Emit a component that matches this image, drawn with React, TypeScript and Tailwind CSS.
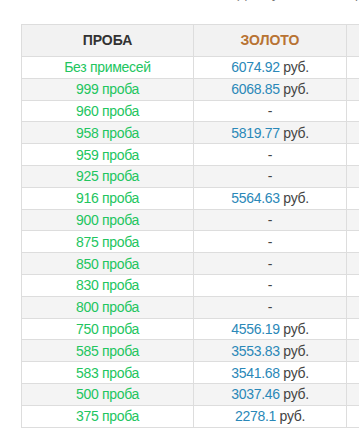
import React from "react";

const rows: [string, string | null][] = [
  ["Без примесей", "6074.92"],
  ["999 проба", "6068.85"],
  ["960 проба", null],
  ["958 проба", "5819.77"],
  ["959 проба", null],
  ["925 проба", null],
  ["916 проба", "5564.63"],
  ["900 проба", null],
  ["875 проба", null],
  ["850 проба", null],
  ["830 проба", null],
  ["800 проба", null],
  ["750 проба", "4556.19"],
  ["585 проба", "3553.83"],
  ["583 проба", "3541.68"],
  ["500 проба", "3037.46"],
  ["375 проба", "2278.1"],
];

export default function App() {
  return (
    <div
      className="w-[359px] h-[439px] overflow-hidden bg-white text-[14px] text-[#333]"
      style={{ fontFamily: '"Liberation Sans", Arial, sans-serif' }}
    >
      <div className="h-[24px] overflow-hidden">
        <div className="mt-[-13px] pl-[235px] whitespace-nowrap text-[13px] leading-[14px] text-[#777]">
          (цена указана за 1 грамм, руб.)
        </div>
      </div>
      <div className="pl-[21px]">
        <table className="table-fixed border-collapse w-[480px]">
          <colgroup>
            <col className="w-[172px]" />
            <col className="w-[153px]" />
            <col className="w-[155px]" />
          </colgroup>
          <thead>
            <tr className="bg-[#f2f2f2]">
              <th className="h-[32px] border border-[#dddddd] font-bold text-[#333] text-center align-middle p-0">
                ПРОБА
              </th>
              <th className="h-[32px] border border-[#dddddd] font-bold text-[#b87333] text-center align-middle p-0">
                ЗОЛОТО
              </th>
              <th className="h-[32px] border border-[#dddddd] p-0"></th>
            </tr>
          </thead>
          <tbody>
            {rows.map(([name, price], i) => (
              <tr key={name} className={i % 2 === 1 ? "bg-[#f4f4f4]" : "bg-white"}>
                <td className="h-[21.8px] border border-[#dddddd] p-0 text-center align-middle leading-[18px] text-[#22c55e] tracking-[-0.3px]">
                  {name}
                </td>
                <td className="h-[21.8px] border border-[#dddddd] p-0 text-center align-middle leading-[18px] tracking-[-0.3px]">
                  {price ? (
                    <>
                      <span className="text-[#2a88b8]">{price}</span>{" "}
                      <span className="text-[#444]">руб.</span>
                    </>
                  ) : (
                    <span className="text-[#444]">-</span>
                  )}
                </td>
                <td className="h-[21.8px] border border-[#dddddd] p-0"></td>
              </tr>
            ))}
          </tbody>
        </table>
      </div>
    </div>
  );
}
